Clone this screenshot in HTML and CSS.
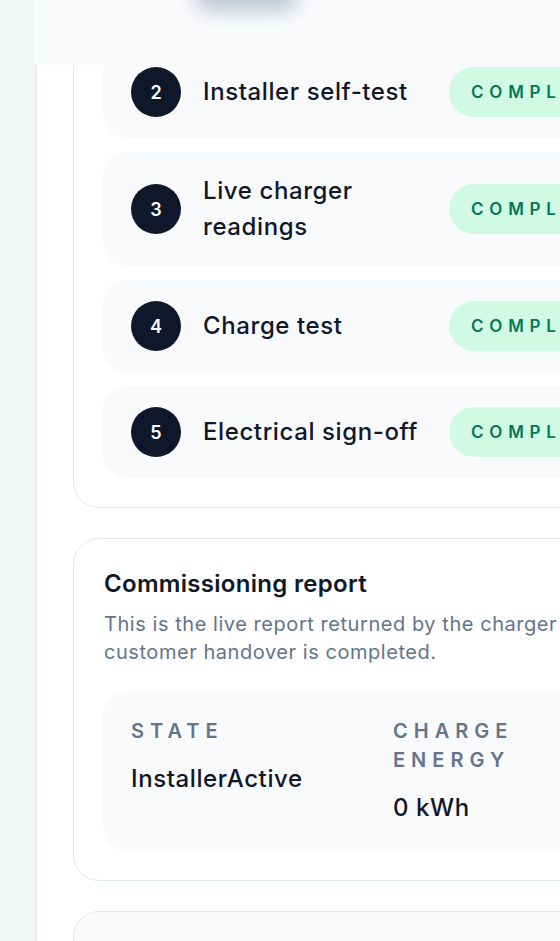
FILE: index.html
```html
<!DOCTYPE html>
<html lang="en">
<head>
<meta charset="utf-8">
<title>Commissioning</title>
<link rel="stylesheet" href="styles.css">
</head>
<body>
<div class="shell">
  <aside class="rail"></aside>
  <main class="panel">
    <header class="topbar"><span class="topbar-blob"></span></header>
    <div class="content">
      <section class="card">
        <ol class="step-list">
          <li class="step"><span class="step-num">2</span><span class="step-title">Installer self-test</span><span class="badge">Complete</span></li>
          <li class="step"><span class="step-num">3</span><span class="step-title">Live charger readings</span><span class="badge">Complete</span></li>
          <li class="step"><span class="step-num">4</span><span class="step-title">Charge test</span><span class="badge">Complete</span></li>
          <li class="step"><span class="step-num">5</span><span class="step-title">Electrical sign-off</span><span class="badge">Complete</span></li>
        </ol>
      </section>
      <section class="card report">
        <h2 class="report-title">Commissioning report</h2>
        <p class="report-desc">This is the live report returned by the charger until customer handover is completed.</p>
        <dl class="stats">
          <div class="stat"><dt class="stat-label">State</dt><dd class="stat-value">InstallerActive</dd></div>
          <div class="stat"><dt class="stat-label">Charge energy</dt><dd class="stat-value">0 kWh</dd></div>
        </dl>
      </section>
      <section class="card card-muted"></section>
    </div>
  </main>
</div>
</body>
</html>
```
FILE: styles.css
```css
* { box-sizing: border-box; }

html, body {
  margin: 0;
  height: 941px;
  overflow: hidden;
}

body {
  font-family: Inter, "Noto Sans", "Liberation Sans", sans-serif;
  color: #0f172a;
  background: linear-gradient(90deg, #f2f8f4 0%, #f6f9f8 100%);
}

.shell {
  display: flex;
  min-height: 941px;
}

.rail {
  flex: 0 0 36px;
}

.panel {
  position: relative;
  flex: 0 0 720px;
  background: #ffffff;
  border-left: 1px solid #e2e8f0;
  min-height: 941px;
}

.topbar {
  position: absolute;
  top: 0;
  left: -3px;
  right: 0;
  height: 65px;
  background: rgba(248, 250, 252, 0.97);
  z-index: 2;
  overflow: hidden;
}

.topbar-blob {
  position: absolute;
  top: -22px;
  left: 160px;
  width: 105px;
  height: 34px;
  border-radius: 999px;
  background: #64748b;
  opacity: 0.35;
  filter: blur(9px);
}

.content {
  display: flex;
  flex-direction: column;
  gap: 30px;
  width: 640px;
  margin-left: 36px;
  padding-top: 16px;
}

.card {
  border: 1px solid #e2e8f0;
  border-radius: 26px;
  background: #ffffff;
  padding: 29px;
}

.step-list {
  list-style: none;
  margin: 0;
  padding: 0;
  display: flex;
  flex-direction: column;
  gap: 14px;
}

.step {
  display: grid;
  grid-template-columns: 50px 224px auto;
  align-items: center;
  column-gap: 22px;
  padding: 21px 28px;
  background: #f8fafc;
  border-radius: 24px;
}

.step-num {
  width: 50px;
  height: 50px;
  border-radius: 50%;
  background: #0f172a;
  color: #ffffff;
  display: grid;
  place-items: center;
  font-size: 18px;
  font-weight: 600;
}

.step-title {
  font-size: 24px;
  line-height: 36px;
  font-weight: 500;
  letter-spacing: 0.6px;
  color: #0f172a;
}

.badge {
  justify-self: start;
  padding: 14px 22px;
  border-radius: 999px;
  background: #d1fae5;
  color: #047857;
  font-size: 17px;
  line-height: 22px;
  font-weight: 600;
  letter-spacing: 0.34em;
  text-transform: uppercase;
}

.report {
  padding: 29px 30px 29px 30px;
}

.report-title {
  margin: 0;
  font-size: 24px;
  line-height: 32px;
  font-weight: 600;
  letter-spacing: 0.3px;
  color: #0f172a;
}

.report-desc {
  margin: 10px 0 0;
  font-size: 20px;
  line-height: 28px;
  letter-spacing: 0.55px;
  color: #64748b;
}

.stats {
  margin: 25px -1px 0;
  display: grid;
  grid-template-columns: 230px 230px;
  column-gap: 32px;
  padding: 26px 28px 27px;
  background: #f8fafc;
  border-radius: 24px;
}

.stat {
  display: flex;
  flex-direction: column;
  gap: 17px;
}

.stat-label {
  font-size: 20px;
  line-height: 29px;
  font-weight: 600;
  letter-spacing: 0.3em;
  text-transform: uppercase;
  color: #64748b;
}

.stat-value {
  margin: 0;
  font-size: 24px;
  line-height: 32px;
  font-weight: 500;
  letter-spacing: 0.6px;
  color: #0f172a;
}

.card-muted {
  background: #f8fafc;
  height: 200px;
}
```
